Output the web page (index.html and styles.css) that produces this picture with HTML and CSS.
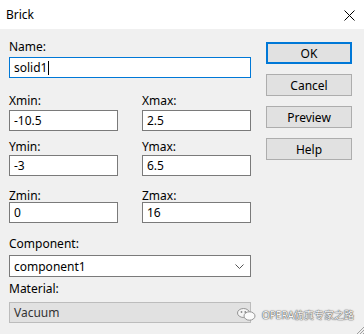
FILE: index.html
```html
<!DOCTYPE html>
<html>
<head>
  <meta charset="utf-8">
  <title>Brick</title>
  <link rel="stylesheet" href="styles.css">
</head>
<body>
  <div class="window">
    <div class="titlebar">
      <span class="title">Brick</span>
      <svg class="close" width="11" height="11" viewBox="0 0 11 11">
        <path d="M0.5 0.5 L10.5 10.5 M10.5 0.5 L0.5 10.5" stroke="#000" stroke-width="1" fill="none"/>
      </svg>
    </div>

    <div class="content">
      <div class="form">
        <div class="field row-name">
          <label>Name:</label>
          <div class="input focused">solid1<span class="caret"></span></div>
        </div>

        <div class="pair row-x">
          <div class="field"><label>Xmin:</label><div class="input">-10.5</div></div>
          <div class="field"><label>Xmax:</label><div class="input">2.5</div></div>
        </div>

        <div class="pair row-y">
          <div class="field"><label>Ymin:</label><div class="input">-3</div></div>
          <div class="field"><label>Ymax:</label><div class="input">6.5</div></div>
        </div>

        <div class="pair row-z">
          <div class="field"><label>Zmin:</label><div class="input">0</div></div>
          <div class="field"><label>Zmax:</label><div class="input">16</div></div>
        </div>

        <div class="field row-comp">
          <label>Component:</label>
          <div class="input combo">
            <span>component1</span>
            <svg width="9" height="5" viewBox="0 0 9 5">
              <path d="M0.5 0.5 L4.5 4.5 L8.5 0.5" stroke="#555" stroke-width="1" fill="none"/>
            </svg>
          </div>
        </div>

        <div class="field row-mat">
          <label>Material:</label>
          <div class="input disabled">Vacuum</div>
        </div>
      </div>

      <div class="buttons">
        <div class="btn default">OK</div>
        <div class="btn">Cancel</div>
        <div class="btn">Preview</div>
        <div class="btn">Help</div>
      </div>
    </div>

    <div class="watermark">
      <svg width="19" height="13" viewBox="0 0 19 13">
        <ellipse cx="6.5" cy="5" rx="6" ry="4.5" fill="#f4f4f4" stroke="#8a8a8a" stroke-width="0.9"/>
        <ellipse cx="12.5" cy="8" rx="5.5" ry="4.2" fill="#fafafa" stroke="#8a8a8a" stroke-width="0.9"/>
        <circle cx="4.5" cy="4" r="0.9" fill="#888"/>
        <circle cx="8.3" cy="4" r="0.9" fill="#888"/>
      </svg>
      <span>OPERA仿真专家之路</span>
    </div>

    <svg class="grip" width="9" height="9" viewBox="0 0 9 9">
      <path d="M9 2 L2 9 M9 5 L5 9 M9 8 L8 9" stroke="#a0a0a0" stroke-width="1" fill="none"/>
    </svg>
  </div>
</body>
</html>
```

FILE: styles.css
```css
* {
    box-sizing: border-box;
}
body {
    margin: 0;
    background: #f0f0f0;
    font-family: "Noto Sans", "Noto Sans CJK SC", sans-serif;
    font-size: 12px;
    color: #000;
}
.window {
    position: relative;
    width: 364px;
    height: 334px;
    overflow: hidden;
}
.titlebar {
    height: 29px;
    background: #fff;
    display: flex;
    align-items: center;
    justify-content: space-between;
    padding: 0 9px 0 6px;
}
.title { font-size: 12px; }
.close { margin-top: 1px; }

.content {
    display: flex;
    align-items: flex-start;
    padding-left: 9px;
}
.form {
    width: 242px;
    padding-top: 10px;
}
.buttons {
    margin-left: 15px;
    margin-top: 13px;
    width: 86px;
    display: flex;
    flex-direction: column;
    gap: 10px;
}
.btn {
    height: 22px;
    background: #e1e1e1;
    border: 1px solid #adadad;
    display: flex;
    align-items: center;
    justify-content: center;
}
.btn.default {
    border: 2px solid #0078d7;
}

.field label {
    display: block;
    line-height: 15px;
}

.input {
    height: 21px;
    background: #fff;
    border: 1px solid #7a7a7a;
    padding: 0 4px;
    display: flex;
    align-items: center;
    white-space: nowrap;
}
.input.focused { border-color: #0078d7; }
.caret {
    display: inline-block;
    width: 1px;
    height: 14px;
    background: #000;
    margin-left: 1px;
}
.input.combo {
    height: 22px;
    justify-content: space-between;
    padding-right: 6px;
}
.input.disabled {
    background: #e1e1e1;
    border-color: #bcbcbc;
    color: #333;
}

.pair {
    display: grid;
    grid-template-columns: 109px 109px;
    column-gap: 24px;
}

.row-name label { margin-bottom: 3px; }
.row-x { margin-top: 15px; }
.row-x label { margin-bottom: 2px; }
.row-y { margin-top: 8px; }
.row-y label { margin-bottom: 1px; }
.row-z { margin-top: 12px; }
.row-z label { margin-bottom: -1px; }
.row-comp { margin-top: 13px; }
.row-comp label { margin-bottom: 4px; }
.row-mat { margin-top: 4px; }
.row-mat label { margin-bottom: 6px; }

.watermark {
    position: absolute;
    left: 237px;
    top: 307px;
    display: flex;
    align-items: center;
    gap: 6px;
    font-size: 10px;
    color: #f6f6f6;
    text-shadow: 0 0 1px #444, 0 0 1px #666, 0 0 2px #999;
}
.grip {
    position: absolute;
    right: 0;
    bottom: 0;
}
```
